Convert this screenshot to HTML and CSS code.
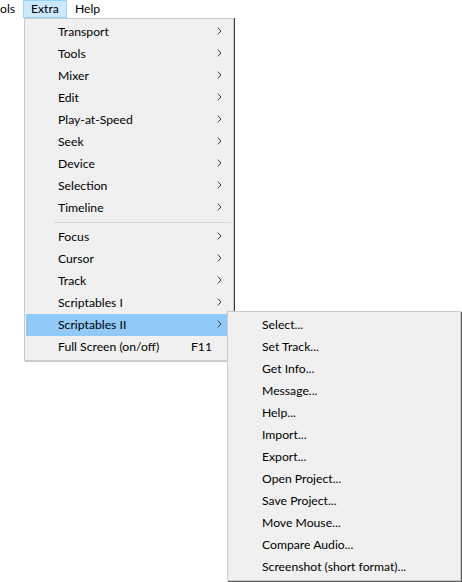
FILE: index.html
```html
<!DOCTYPE html>
<html>
<head>
<meta charset="utf-8">
<link rel="stylesheet" href="styles.css">
</head>
<body>
<div class="menubar">
  <span class="mb-item mb-cut">ols</span>
  <span class="mb-item mb-active">Extra</span>
  <span class="mb-item">Help</span>
</div>

<div class="menu main-menu">
  <div class="mi"><span class="lbl">Transport</span><svg class="arr" width="5" height="8" viewBox="0 0 5 8"><path d="M0.8 0.6 L4 4 L0.8 7.4"/></svg></div>
  <div class="mi"><span class="lbl">Tools</span><svg class="arr" width="5" height="8" viewBox="0 0 5 8"><path d="M0.8 0.6 L4 4 L0.8 7.4"/></svg></div>
  <div class="mi"><span class="lbl">Mixer</span><svg class="arr" width="5" height="8" viewBox="0 0 5 8"><path d="M0.8 0.6 L4 4 L0.8 7.4"/></svg></div>
  <div class="mi"><span class="lbl">Edit</span><svg class="arr" width="5" height="8" viewBox="0 0 5 8"><path d="M0.8 0.6 L4 4 L0.8 7.4"/></svg></div>
  <div class="mi"><span class="lbl">Play-at-Speed</span><svg class="arr" width="5" height="8" viewBox="0 0 5 8"><path d="M0.8 0.6 L4 4 L0.8 7.4"/></svg></div>
  <div class="mi"><span class="lbl">Seek</span><svg class="arr" width="5" height="8" viewBox="0 0 5 8"><path d="M0.8 0.6 L4 4 L0.8 7.4"/></svg></div>
  <div class="mi"><span class="lbl">Device</span><svg class="arr" width="5" height="8" viewBox="0 0 5 8"><path d="M0.8 0.6 L4 4 L0.8 7.4"/></svg></div>
  <div class="mi"><span class="lbl">Selection</span><svg class="arr" width="5" height="8" viewBox="0 0 5 8"><path d="M0.8 0.6 L4 4 L0.8 7.4"/></svg></div>
  <div class="mi"><span class="lbl">Timeline</span><svg class="arr" width="5" height="8" viewBox="0 0 5 8"><path d="M0.8 0.6 L4 4 L0.8 7.4"/></svg></div>
  <div class="sep"></div>
  <div class="mi"><span class="lbl">Focus</span><svg class="arr" width="5" height="8" viewBox="0 0 5 8"><path d="M0.8 0.6 L4 4 L0.8 7.4"/></svg></div>
  <div class="mi"><span class="lbl">Cursor</span><svg class="arr" width="5" height="8" viewBox="0 0 5 8"><path d="M0.8 0.6 L4 4 L0.8 7.4"/></svg></div>
  <div class="mi"><span class="lbl">Track</span><svg class="arr" width="5" height="8" viewBox="0 0 5 8"><path d="M0.8 0.6 L4 4 L0.8 7.4"/></svg></div>
  <div class="mi"><span class="lbl">Scriptables I</span><svg class="arr" width="5" height="8" viewBox="0 0 5 8"><path d="M0.8 0.6 L4 4 L0.8 7.4"/></svg></div>
  <div class="mi hl"><span class="lbl">Scriptables II</span><svg class="arr" width="5" height="8" viewBox="0 0 5 8"><path d="M0.8 0.6 L4 4 L0.8 7.4"/></svg></div>
  <div class="mi"><span class="lbl">Full Screen (on/off)</span><span class="acc">F11</span></div>
</div>

<div class="menu sub-menu">
  <div class="mi"><span class="lbl">Select...</span></div>
  <div class="mi"><span class="lbl">Set Track...</span></div>
  <div class="mi"><span class="lbl">Get Info...</span></div>
  <div class="mi"><span class="lbl">Message...</span></div>
  <div class="mi"><span class="lbl">Help...</span></div>
  <div class="mi"><span class="lbl">Import...</span></div>
  <div class="mi"><span class="lbl">Export...</span></div>
  <div class="mi"><span class="lbl">Open Project...</span></div>
  <div class="mi"><span class="lbl">Save Project...</span></div>
  <div class="mi"><span class="lbl">Move Mouse...</span></div>
  <div class="mi"><span class="lbl">Compare Audio...</span></div>
  <div class="mi"><span class="lbl">Screenshot (short format)...</span></div>
</div>
</body>
</html>
```

FILE: styles.css
```css
* { box-sizing: border-box; }
html, body {
  margin: 0;
  padding: 0;
  background: #ffffff;
  width: 462px;
  height: 582px;
  overflow: hidden;
}
body {
  position: relative;
  font-family: "Lato", "Noto Sans", sans-serif;
  font-size: 12.2px;
  color: #000;
}

.menubar {
  display: flex;
  height: 18px;
  align-items: stretch;
}
.mb-item {
  display: flex;
  align-items: center;
  padding: 0 7px 1px;
  border: 1px solid transparent;
  line-height: 16px;
}
.mb-cut {
  width: 23px;
  padding-left: 0;
  padding-right: 0;
  border-left: 0;
  border-right: 0;
}
.mb-active {
  background: #cce8ff;
  border-color: #99d1ff;
}

.menu {
  position: absolute;
  display: flex;
  flex-direction: column;
  background: #f0f0f0;
  border: 1px solid #cccccc;
  padding: 2px 1px;
}
.main-menu {
  left: 24px;
  top: 18px;
  width: 210px;
  height: 343px;
  box-shadow: 1px 0 0 #3c3c3c, 1px 1px 0 #c8c8c8;
}
.sub-menu {
  left: 227px;
  top: 311px;
  width: 234px;
  height: 270px;
  box-shadow: 1px 1px 0 #5a5a5a;
}

.mi {
  display: flex;
  align-items: center;
  height: 22px;
  padding-left: 32px;
  padding-right: 10px;
  padding-bottom: 2px;
  white-space: nowrap;
}
.sub-menu .mi { padding-left: 33px; }
.mi .lbl { flex: 1; }
.mi.hl { background: #91c9f7; }
.arr {
  flex: none;
  fill: none;
  stroke: #3a3a3a;
  stroke-width: 1;
}
.acc { margin-right: 10px; }

.sep {
  height: 7px;
  display: flex;
  align-items: center;
  padding-left: 28px;
  padding-right: 1px;
}
.sep::before {
  content: "";
  display: block;
  flex: 1;
  height: 1px;
  background: #d7d7d7;
}
```
